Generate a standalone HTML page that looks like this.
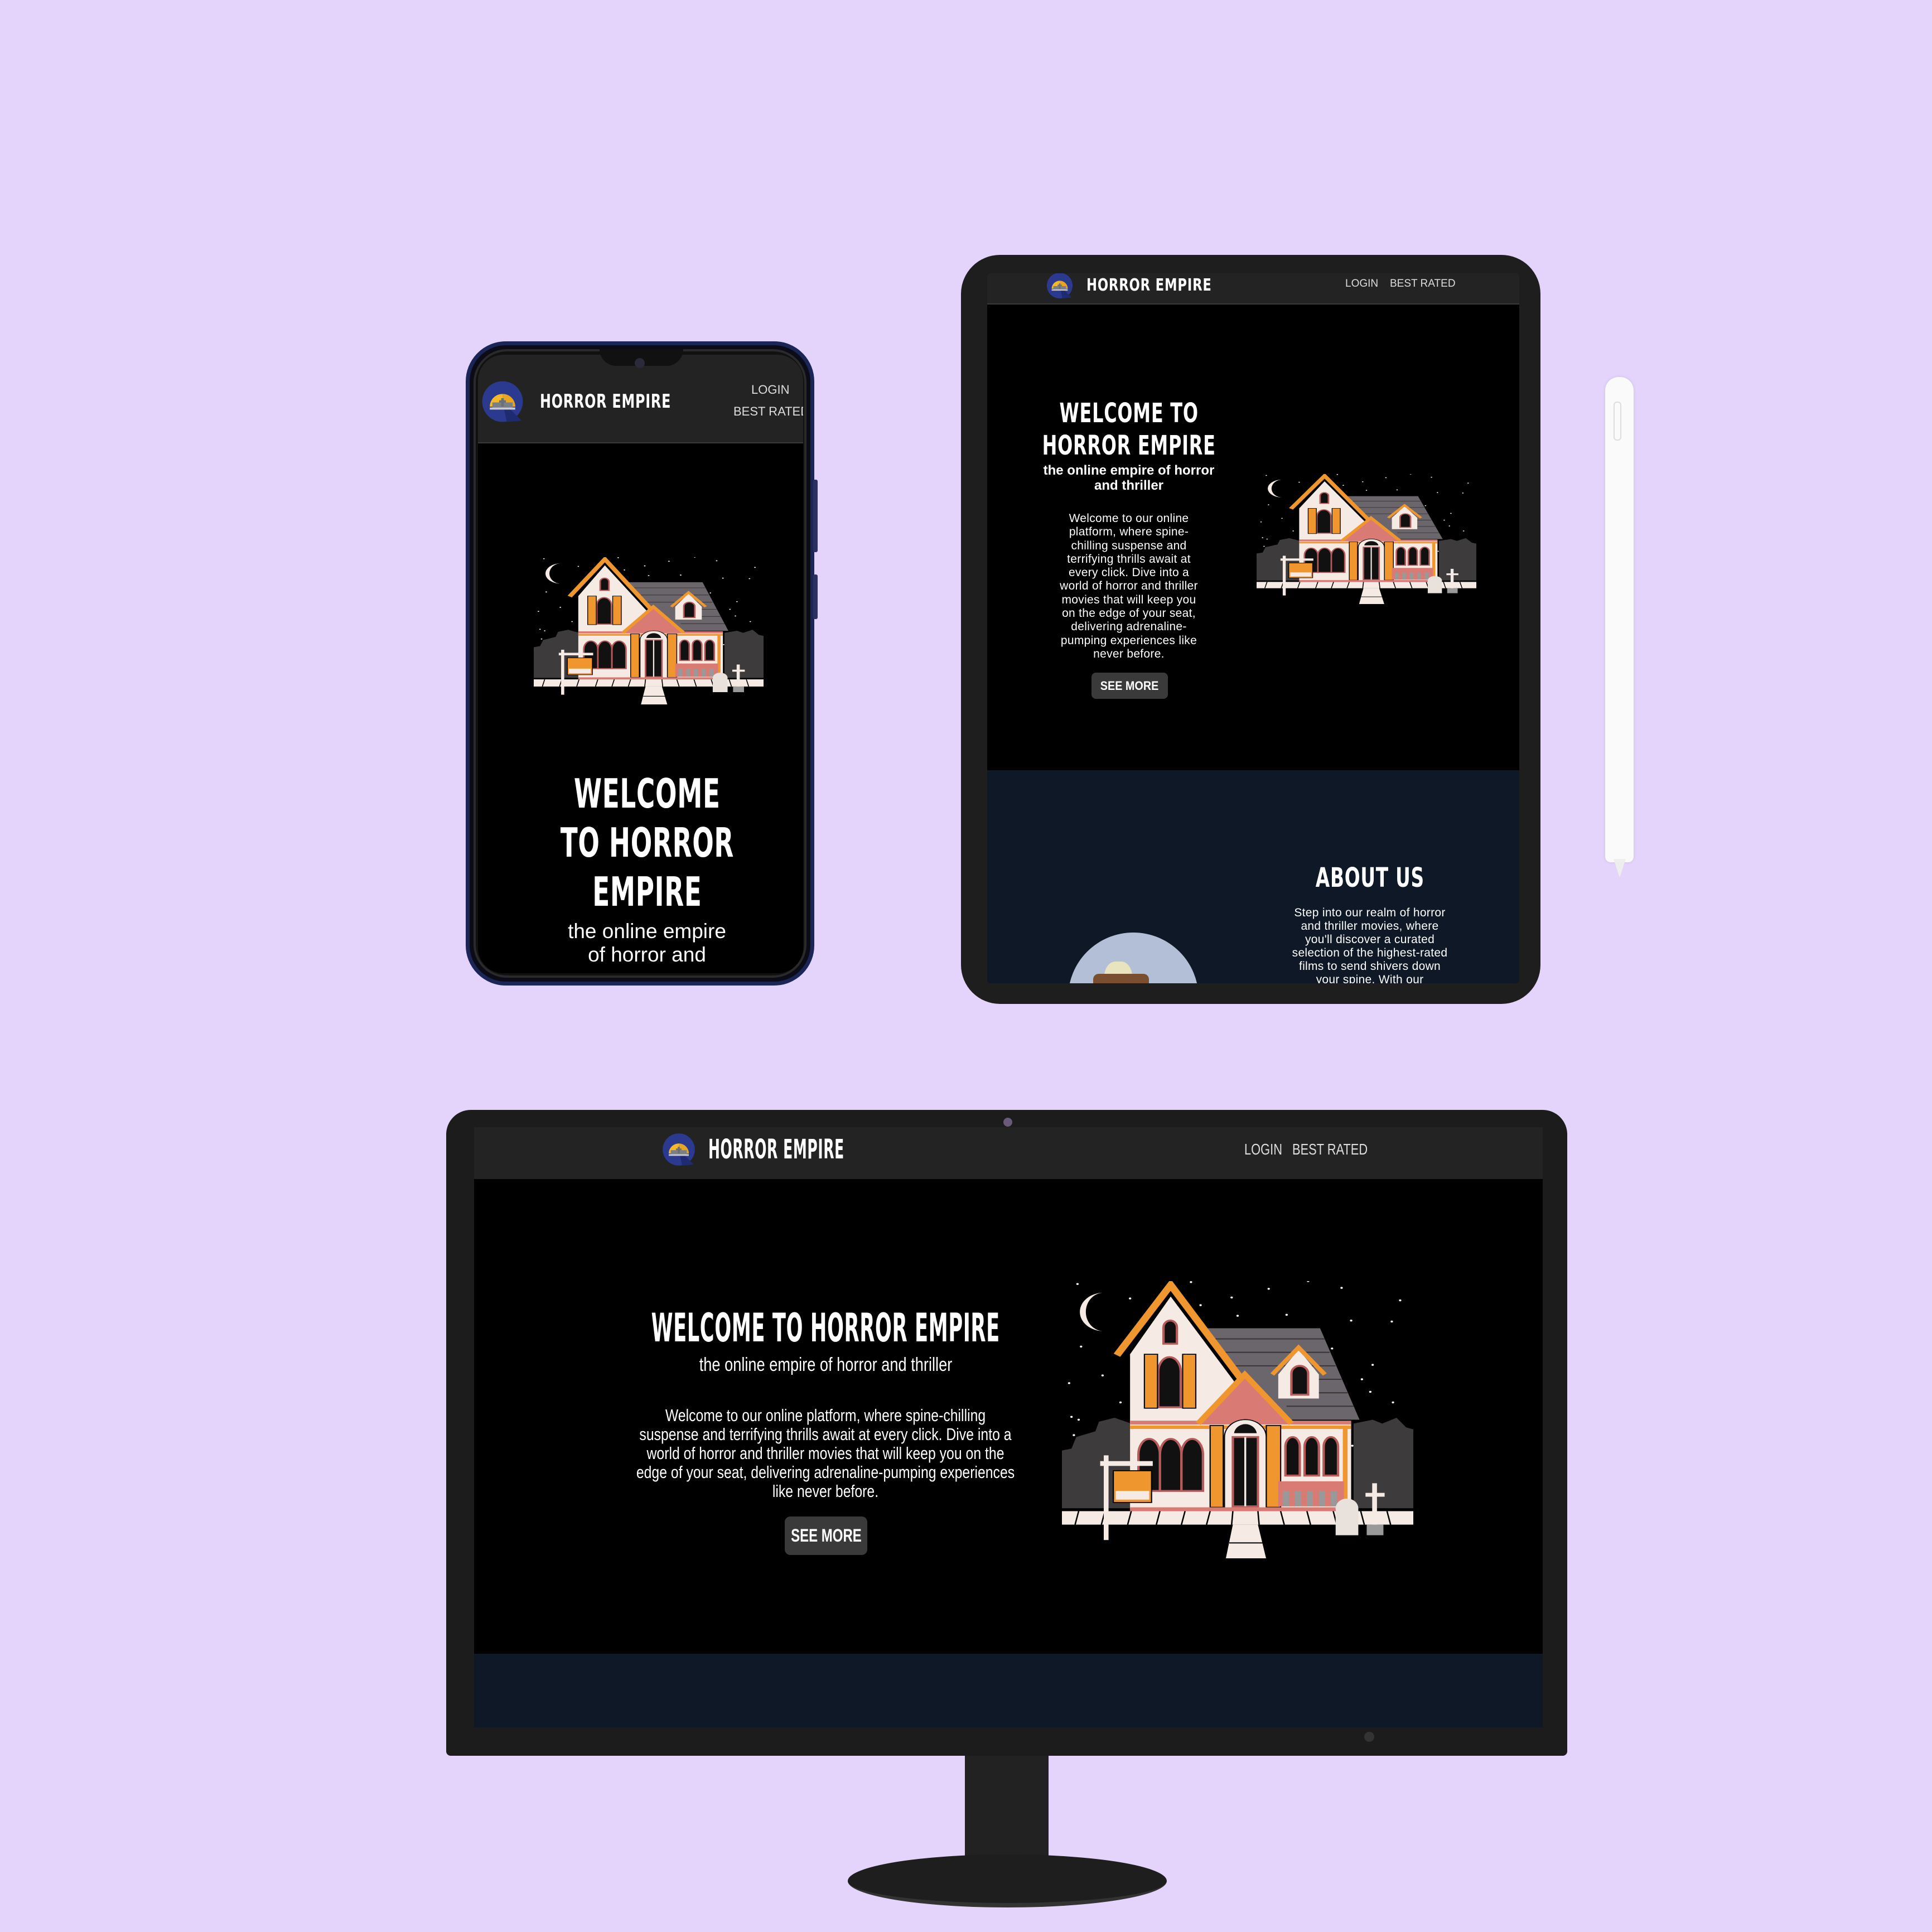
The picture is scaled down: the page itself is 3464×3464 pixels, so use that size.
<!DOCTYPE html>
<html><head><meta charset="utf-8"><style>
*{margin:0;padding:0;box-sizing:border-box}
html,body{width:3464px;height:3464px;overflow:hidden;background:#e4d4fb}
.a{position:absolute}
.hf{font-family:"DejaVu Sans Condensed","DejaVu Sans",sans-serif;font-weight:bold;color:#fff;letter-spacing:1px;white-space:nowrap}
.sf{font-family:"Liberation Sans",sans-serif;color:#fff}
.c{text-align:center}
.s{display:inline-block;white-space:nowrap}
</style></head><body>
<svg width="0" height="0" style="position:absolute">
<defs>
<symbol id="house" viewBox="60 60 1470 1440" preserveAspectRatio="none">
<rect x="60" y="60" width="1470" height="1440" fill="#000"/>
<g fill="#fff"><circle cx="125" cy="75" r="5"/><circle cx="345" cy="150" r="5"/><circle cx="600" cy="65" r="5"/><circle cx="640" cy="185" r="5"/><circle cx="925" cy="100" r="5"/><circle cx="770" cy="145" r="5"/><circle cx="1090" cy="60" r="5"/><circle cx="1230" cy="95" r="5"/><circle cx="1475" cy="160" r="5"/><circle cx="1440" cy="270" r="5"/><circle cx="1270" cy="265" r="5"/><circle cx="1000" cy="235" r="5"/><circle cx="795" cy="240" r="5"/><circle cx="140" cy="400" r="5"/><circle cx="230" cy="550" r="5"/><circle cx="90" cy="590" r="5"/><circle cx="305" cy="690" r="5"/><circle cx="100" cy="765" r="5"/><circle cx="130" cy="780" r="5"/><circle cx="110" cy="860" r="5"/><circle cx="1190" cy="410" r="5"/><circle cx="1360" cy="495" r="5"/><circle cx="1315" cy="570" r="5"/><circle cx="1350" cy="635" r="5"/><circle cx="1445" cy="690" r="5"/><circle cx="1275" cy="915" r="5"/></g>
<path d="M235 120 A100 100 0 1 0 235 320 A75 100 0 1 1 235 120Z" fill="#f6ebe4"/>
<path d="M60 1240 V940 L100 930 L120 870 L200 840 L215 790 L280 770 L350 800 V1240Z" fill="#3d3b3c"/>
<path d="M1280 1240 V800 L1360 780 L1400 800 L1460 770 L1500 820 L1530 830 V1240Z" fill="#3d3b3c"/>
<rect x="60" y="1255" width="1470" height="70" fill="#f6ebe4"/>
<g stroke="#000" stroke-width="6"><line x1="130" y1="1255" x2="115" y2="1325"/><line x1="240" y1="1255" x2="225" y2="1325"/><line x1="350" y1="1255" x2="335" y2="1325"/><line x1="470" y1="1255" x2="455" y2="1325"/><line x1="575" y1="1255" x2="560" y2="1325"/><line x1="680" y1="1255" x2="665" y2="1325"/><line x1="775" y1="1255" x2="770" y2="1325"/><line x1="880" y1="1255" x2="885" y2="1325"/><line x1="975" y1="1255" x2="990" y2="1325"/><line x1="1085" y1="1255" x2="1100" y2="1325"/><line x1="1195" y1="1255" x2="1210" y2="1325"/><line x1="1310" y1="1255" x2="1325" y2="1325"/><line x1="1420" y1="1255" x2="1435" y2="1325"/></g>
<path d="M775 1325 H880 L915 1505 H745Z" fill="#f6ebe4"/>
<line x1="760" y1="1420" x2="900" y2="1420" stroke="#000" stroke-width="6"/>
<path d="M660 305 H1140 L1305 780 H1000 L820 560Z" fill="#6b666b"/>
<g stroke="#3a3638" stroke-width="6"><line x1="700" y1="360" x2="1160" y2="360"/><line x1="740" y1="430" x2="1180" y2="430"/><line x1="780" y1="500" x2="1205" y2="500"/><line x1="980" y1="570" x2="1230" y2="570"/><line x1="990" y1="640" x2="1255" y2="640"/><line x1="1000" y1="710" x2="1280" y2="710"/></g>
<path d="M345 440 L515 140 L780 580 V800 H345Z" fill="#f6ebe4"/>
<path d="M290 445 L515 80 L805 560" fill="none" stroke="#f0962e" stroke-width="32"/>
<rect x="345" y="790" width="925" height="455" fill="#f6ebe4"/>
<rect x="345" y="785" width="925" height="20" fill="#d97b74"/>
<rect x="345" y="810" width="925" height="18" fill="#f0962e"/>
<path d="M640 800 L825 555 L1010 800Z" fill="#d97b74"/>
<path d="M630 800 L825 545 L1020 800" fill="none" stroke="#f0962e" stroke-width="26"/>
<path d="M965 545 L1050 415 L1135 545 V670 H965Z" fill="#f6ebe4"/>
<path d="M940 545 L1050 405 L1160 545" fill="none" stroke="#f0962e" stroke-width="20"/>
<g fill="#111" stroke="#b55b5b" stroke-width="10">
<path d="M1020 650 V540 A35 40 0 0 1 1090 540 V650Z"/>
<path d="M485 385 V300 A28 35 0 0 1 541 300 V385Z"/>
<path d="M463 715 V530 A47 75 0 0 1 557 530 V715Z"/>
<path d="M995 1070 V920 A30 50 0 0 1 1055 920 V1070Z"/>
<path d="M1075 1070 V920 A30 50 0 0 1 1135 920 V1070Z"/>
<path d="M1155 1070 V920 A30 50 0 0 1 1215 920 V1070Z"/>
<path d="M380 1150 V960 A45 80 0 0 1 470 960 V1150Z"/>
<path d="M470 1150 V960 A45 80 0 0 1 560 960 V1150Z"/>
<path d="M560 1150 V960 A45 80 0 0 1 650 960 V1150Z"/>
</g>
<rect x="405" y="440" width="55" height="280" fill="#f0962e" stroke="#000" stroke-width="5"/>
<rect x="565" y="440" width="55" height="280" fill="#f0962e" stroke="#000" stroke-width="5"/>
<path d="M740 1240 V870 A87 90 0 0 1 915 870 V1240Z" fill="#f6ebe4" stroke="#000" stroke-width="5"/>
<rect x="775" y="870" width="105" height="360" fill="#111" stroke="#b55b5b" stroke-width="10"/>
<line x1="827" y1="870" x2="827" y2="1230" stroke="#f6ebe4" stroke-width="8"/>
<path d="M780 850 A48 55 0 0 1 875 850Z" fill="#111"/>
<rect x="680" y="810" width="55" height="425" fill="#f0962e" stroke="#000" stroke-width="5"/>
<rect x="915" y="810" width="60" height="425" fill="#f0962e" stroke="#000" stroke-width="5"/>
<rect x="1235" y="810" width="20" height="425" fill="#f0962e"/>
<rect x="965" y="1100" width="275" height="130" fill="#d97b74"/>
<g fill="#999"><rect x="985" y="1150" width="25" height="80"/><rect x="1035" y="1150" width="25" height="80"/><rect x="1085" y="1150" width="25" height="80"/><rect x="1135" y="1150" width="25" height="80"/><rect x="1185" y="1150" width="25" height="80"/></g>
<rect x="345" y="1235" width="860" height="20" fill="#d97b74"/>
<rect x="235" y="965" width="20" height="440" fill="#f6ebe4"/>
<rect x="220" y="995" width="220" height="25" fill="#f6ebe4"/>
<rect x="275" y="1045" width="160" height="165" fill="#f0962e" stroke="#000" stroke-width="5"/>
<rect x="285" y="1150" width="140" height="45" fill="#f6ebe4"/>
<path d="M1205 1380 V1240 A47 50 0 0 1 1300 1240 V1380Z" fill="#e9e1dc"/>
<rect x="1358" y="1110" width="20" height="230" fill="#f6ebe4"/>
<rect x="1330" y="1160" width="80" height="20" fill="#f6ebe4"/>
<rect x="1335" y="1325" width="70" height="55" fill="#999"/>
</symbol>
<symbol id="logo" viewBox="0 0 100 100">
<circle cx="50" cy="50" r="48" fill="#2b3a8f"/>
<path d="M50 50 L95 95 L60 98Z" fill="#1f2b70"/>
<path d="M20 62 A30 30 0 0 1 80 62Z" fill="#f5b82a"/>
<path d="M50 32 A30 30 0 0 1 80 62 H50Z" fill="#e8a520"/>
<rect x="26" y="52" width="48" height="12" fill="#7b7f86"/>
<rect x="47" y="42" width="6" height="20" fill="#6b6f76"/><rect x="42" y="47" width="16" height="5" fill="#6b6f76"/>
<rect x="20" y="64" width="60" height="5" fill="#c9c9cf"/>
</symbol>
</defs></svg>

<!-- PHONE -->
<div class="a" style="left:835px;top:612px;width:625px;height:1155px;border-radius:72px;background:#0c0c18;border:7px solid #1b2656"></div>
<div class="a" style="left:1458px;top:860px;width:8px;height:130px;background:#2a3160;border-radius:3px"></div>
<div class="a" style="left:1458px;top:1030px;width:8px;height:80px;background:#2a3160;border-radius:3px"></div>
<div class="a" style="left:849px;top:626px;width:597px;height:1127px;border-radius:60px;background:#111;border:4px solid #2a2a2a"></div>
<div class="a" style="left:857px;top:636px;width:583px;height:1109px;border-radius:46px;overflow:hidden;background:#000">
  <div class="a" style="left:0;top:0;width:583px;height:159px;background:#232323;border-bottom:2px solid #3a3a3a"></div>
  <svg class="a" style="left:6px;top:46px" width="76" height="76"><use href="#logo"/></svg>
  <div class="a hf" style="left:111px;top:62px;font-size:34px;line-height:44px;transform:scaleX(.78);transform-origin:0 0">HORROR EMPIRE</div>
  <div class="a sf" style="left:490px;top:50px;font-size:22px;color:#ddd">LOGIN</div>
  <div class="a sf" style="left:458px;top:89px;font-size:22px;color:#ddd;white-space:nowrap">BEST RATED</div>
  <svg class="a" style="left:100px;top:363px" width="412" height="264"><use href="#house" width="412" height="264"/></svg>
  <div class="a hf c" style="left:0;top:743px;width:606px;font-size:72px;line-height:88px"><span class="s" style="transform:scaleX(.7)">WELCOME<br>TO HORROR<br>EMPIRE</span></div>
  <div class="a sf c" style="left:0;top:1013px;width:606px;font-size:37px;line-height:42px">the online empire<br>of horror and</div>
</div>
<div class="a" style="left:1075px;top:626px;width:150px;height:30px;background:#111;border-radius:0 0 40px 40px"></div>
<div class="a" style="left:1138px;top:642px;width:18px;height:18px;border-radius:50%;background:#2a2a3a"></div>

<!-- TABLET -->
<div class="a" style="left:1723px;top:457px;width:1039px;height:1343px;border-radius:70px;background:#1e1e1e"></div>
<div class="a" style="left:1770px;top:490px;width:954px;height:1273px;overflow:hidden;background:#000;border-radius:6px">
  <div class="a" style="left:0;top:0;width:954px;height:56px;background:#232323;border-bottom:2px solid #3a3a3a"></div>
  <svg class="a" style="left:106px;top:-2px" width="48" height="48"><use href="#logo"/></svg>
  <div class="a hf" style="left:178px;top:4px;font-size:30px;line-height:36px;transform:scaleX(.84);transform-origin:0 0">HORROR EMPIRE</div>
  <div class="a sf" style="left:642px;top:8px;font-size:19px;color:#ddd">LOGIN</div>
  <div class="a sf" style="left:722px;top:8px;font-size:19px;color:#ddd">BEST RATED</div>
  <div class="a hf c" style="left:-246px;top:222px;width:1000px;font-size:48px;line-height:58px"><span class="s" style="transform:scaleX(.74)">WELCOME TO<br>HORROR EMPIRE</span></div>
  <div class="a sf c" style="left:54px;top:340px;width:400px;font-size:24px;line-height:27px;font-weight:bold">the online empire of horror<br>and thriller</div>
  <div class="a sf c" style="left:119px;top:428px;width:270px;font-size:21px;line-height:24.3px;letter-spacing:.3px">Welcome to our online platform, where spine-chilling suspense and terrifying thrills await at every click. Dive into a world of horror and thriller movies that will keep you on the edge of your seat, delivering adrenaline-pumping experiences like never before.</div>
  <div class="a" style="left:187px;top:716px;width:137px;height:47px;background:#3a3a3a;border-radius:8px"></div>
  <div class="a sf c" style="left:55px;top:716px;width:400px;height:47px;font-size:22px;line-height:47px;font-weight:bold"><span class="s" style="transform:scaleX(.9)">SEE MORE</span></div>
  <svg class="a" style="left:483px;top:360px" width="394" height="233"><use href="#house" width="394" height="233"/></svg>
  <div class="a" style="left:0;top:891px;width:954px;height:382px;background:#0f1826"></div>
  <div class="a hf c" style="left:486px;top:1055px;width:400px;font-size:48px;line-height:58px"><span class="s" style="transform:scaleX(.76)">ABOUT US</span></div>
  <div class="a sf c" style="left:541px;top:1135px;width:290px;font-size:21px;line-height:24px;letter-spacing:.3px">Step into our realm of horror and thriller movies, where you'll discover a curated selection of the highest-rated films to send shivers down your spine. With our</div>
  <div class="a" style="left:145px;top:1182px;width:234px;height:234px;border-radius:50%;background:#b3bfd6"></div>
  <div class="a" style="left:210px;top:1234px;width:50px;height:66px;border-radius:40% 40% 50% 50%;background:#e9e4c0"></div>
  <div class="a" style="left:190px;top:1256px;width:100px;height:20px;background:#7a4e30;border-radius:10px 10px 0 0"></div>
</div>

<!-- PENCIL -->
<div class="a" style="left:2878px;top:676px;width:51px;height:870px;border-radius:24px 24px 10px 10px;background:#fafafa;box-shadow:0 0 6px rgba(0,0,0,.1)"></div>
<div class="a" style="left:2893px;top:720px;width:14px;height:70px;border-radius:6px;border:2px solid #ddd"></div>
<div class="a" style="left:2893px;top:1540px;width:0;height:0;border-left:11px solid transparent;border-right:11px solid transparent;border-top:33px solid #eee"></div>

<!-- MONITOR -->
<div class="a" style="left:1730px;top:3140px;width:150px;height:207px;background:#222"></div>
<div class="a" style="left:1520px;top:3325px;width:572px;height:95px;border-radius:50%;background:#1e1e1e;border-bottom:8px solid #333"></div>
<div class="a" style="left:800px;top:1990px;width:2010px;height:1158px;border-radius:44px 44px 8px 8px;background:#1c1c1c"></div>
<div class="a" style="left:1799px;top:2004px;width:16px;height:16px;border-radius:50%;background:#6a5a7a"></div>
<div class="a" style="left:850px;top:2021px;width:1916px;height:1076px;overflow:hidden;background:#000">
  <div class="a" style="left:0;top:0;width:1916px;height:93px;background:#232323"></div>
  <svg class="a" style="left:337px;top:10px" width="60" height="60"><use href="#logo"/></svg>
  <div class="a hf" style="left:420px;top:12px;font-size:48px;line-height:56px;transform:scaleX(.58);transform-origin:0 0">HORROR EMPIRE</div>
  <div class="a sf" style="left:1381px;top:24px;font-size:28px;transform:scaleX(.78);transform-origin:0 0;color:#ddd;white-space:nowrap">LOGIN</div>
  <div class="a sf" style="left:1467px;top:24px;font-size:28px;transform:scaleX(.78);transform-origin:0 0;color:#ddd;white-space:nowrap">BEST RATED</div>
  <div class="a hf c" style="left:-370px;top:320px;width:2000px;font-size:70px;line-height:80px"><span class="s" style="transform:scaleX(.56)">WELCOME TO HORROR EMPIRE</span></div>
  <div class="a sf c" style="left:130px;top:406px;width:1000px;font-size:34px;line-height:40px"><span class="s" style="transform:scaleX(.8)">the online empire of horror and thriller</span></div>
  <div class="a" style="left:130px;top:500px;width:1000px">
    <div class="sf c" style="font-size:31px;line-height:34px;margin:0 auto;width:850px;transform:scaleX(.8)">Welcome to our online platform, where spine-chilling suspense and terrifying thrills await at every click. Dive into a world of horror and thriller movies that will keep you on the edge of your seat, delivering adrenaline-pumping experiences like never before.</div>
  </div>
  <div class="a" style="left:557px;top:698px;width:148px;height:69px;background:#3a3a3a;border-radius:10px"></div>
  <div class="a sf c" style="left:331px;top:698px;width:600px;height:69px;font-size:32px;line-height:69px;font-weight:bold"><span class="s" style="transform:scaleX(.75)">SEE MORE</span></div>
  <svg class="a" style="left:1054px;top:276px" width="630" height="497"><use href="#house" width="630" height="497"/></svg>
  <div class="a" style="left:0;top:944px;width:1916px;height:132px;background:#0f1826"></div>
</div>
<div class="a" style="left:2446px;top:3105px;width:18px;height:18px;border-radius:50%;background:#333"></div>
</body></html>
